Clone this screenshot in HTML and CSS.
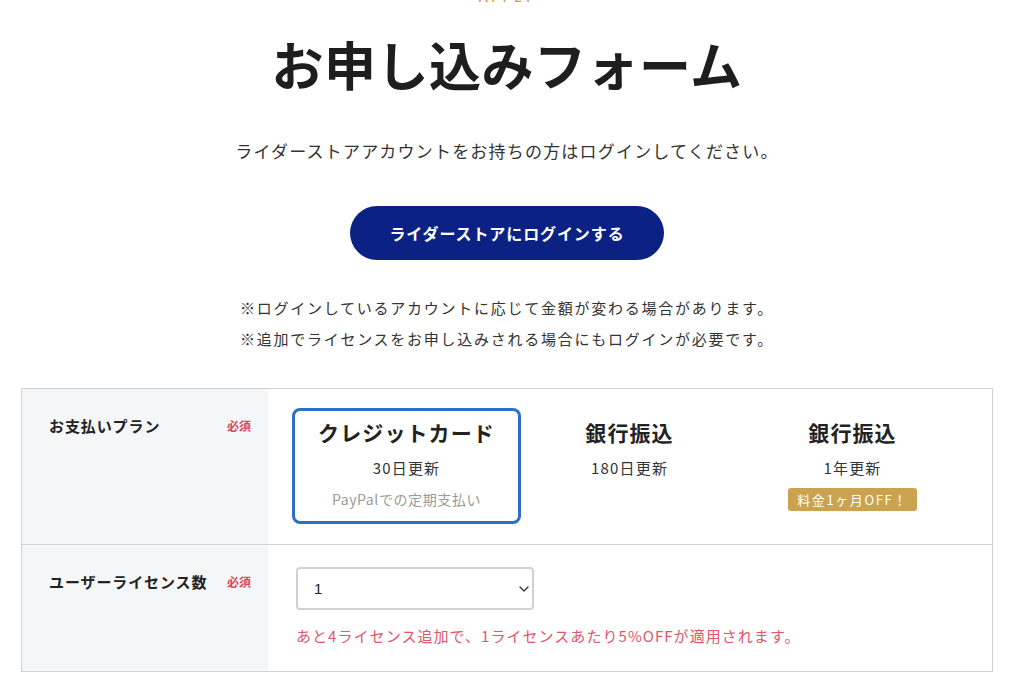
FILE: index.html
```html
<!DOCTYPE html>
<html lang="ja">
<head>
<meta charset="utf-8">
<title>お申し込みフォーム</title>
<link rel="stylesheet" href="styles.css">
</head>
<body>
<main class="page">
  <header class="head">
    <p class="eyebrow">APPLY</p>
    <h1 class="title">お申し込みフォーム</h1>
    <p class="lead">ライダーストアアカウントをお持ちの方はログインしてください。</p>
    <a class="login-btn" href="#">ライダーストアにログインする</a>
    <div class="notes">
      <p>※ログインしているアカウントに応じて金額が変わる場合があります。</p>
      <p>※追加でライセンスをお申し込みされる場合にもログインが必要です。</p>
    </div>
  </header>

  <section class="form">
    <div class="row">
      <div class="label-cell">
        <span class="label">お支払いプラン</span>
        <span class="req">必須</span>
      </div>
      <div class="field-cell plans-cell">
        <div class="plans">
          <div class="plan plan-active">
            <div class="plan-name">クレジットカード</div>
            <div class="plan-term">30日更新</div>
            <div class="plan-sub">PayPalでの定期支払い</div>
          </div>
          <div class="plan">
            <div class="plan-name">銀行振込</div>
            <div class="plan-term">180日更新</div>
          </div>
          <div class="plan">
            <div class="plan-name">銀行振込</div>
            <div class="plan-term">1年更新</div>
            <div class="badge">料金1ヶ月OFF！</div>
          </div>
        </div>
      </div>
    </div>
    <div class="row">
      <div class="label-cell">
        <span class="label">ユーザーライセンス数</span>
        <span class="req">必須</span>
      </div>
      <div class="field-cell license-cell">
        <div class="select-wrap">
          <select class="select">
            <option>1</option>
            <option>2</option>
            <option>3</option>
            <option>4</option>
            <option>5</option>
          </select>
          <svg class="chev" width="10" height="6" viewBox="0 0 10 6" aria-hidden="true"><path d="M1 1l4 4 4-4" fill="none" stroke="#333" stroke-width="1.3" stroke-linecap="round" stroke-linejoin="round"/></svg>
        </div>
        <p class="discount">あと4ライセンス追加で、1ライセンスあたり5%OFFが適用されます。</p>
      </div>
    </div>
  </section>
</main>
</body>
</html>
```

FILE: styles.css
```css
* { box-sizing: border-box; }
html, body { margin: 0; padding: 0; background: #fff; }
body {
  font-family: "Noto Sans CJK JP", "Noto Sans", "Liberation Sans", sans-serif;
  color: #222;
  overflow: hidden;
}
p { margin: 0; }

.page {
  width: 972px;
  margin-left: 21px;
}

.head {
  display: flex;
  flex-direction: column;
  align-items: center;
  text-align: center;
}

.eyebrow {
  margin-top: -12px;
  font-size: 14px;
  line-height: 18px;
  letter-spacing: 3px;
  color: #c9a24c;
  font-family: "Noto Sans", "Liberation Sans", sans-serif;
  font-weight: 500;
}

.title {
  margin: 23px 0 0;
  font-size: 52px;
  line-height: 70px;
  font-weight: 700;
  letter-spacing: 0.5px;
  color: #1e1e1e;
}

.lead {
  margin-top: 38px;
  font-size: 17px;
  line-height: 28px;
  letter-spacing: 1.2px;
  color: #333;
}

.login-btn {
  margin-top: 41px;
  width: 314px;
  height: 54px;
  border-radius: 27px;
  background: #0b2284;
  color: #fff;
  text-decoration: none;
  font-size: 16px;
  font-weight: 700;
  letter-spacing: 0.9px;
  display: flex;
  align-items: center;
  justify-content: center;
}

.notes {
  margin-top: 32px;
  font-size: 15px;
  line-height: 31px;
  letter-spacing: 1.75px;
  color: #333;
}

.form {
  margin-top: 34px;
  border: 1px solid #d2d2d2;
}

.row {
  display: flex;
}
.row + .row { border-top: 1px solid #d2d2d2; }

.label-cell {
  width: 246px;
  flex: none;
  background: #f5f6f8;
  display: flex;
  align-items: flex-start;
  justify-content: space-between;
  padding: 25px 17px 0 27px;
}
.label {
  font-size: 15px;
  line-height: 24px;
  font-weight: 700;
  letter-spacing: 0.9px;
  color: #222;
}
.req {
  font-size: 12px;
  line-height: 24px;
  font-weight: 700;
  color: #d8475c;
}

.field-cell { flex: 1; }

.plans-cell { padding: 19px 0 20px 27px; }
.plans {
  display: grid;
  grid-template-columns: repeat(3, 223px);
}
.plan {
  display: flex;
  flex-direction: column;
  align-items: center;
  padding-top: 9px;
  height: 116px;
}
.plan-active {
  margin: 0 -3px;
  border: 3px solid #2f6fcb;
  border-radius: 8px;
  padding-top: 6px;
}
.plan-name {
  font-size: 21px;
  line-height: 30px;
  font-weight: 700;
  letter-spacing: 1.1px;
  color: #222;
}
.plan-term {
  margin-top: 9px;
  font-size: 15px;
  line-height: 24px;
  letter-spacing: 1.2px;
  color: #333;
}
.plan-sub {
  margin-top: 8px;
  font-size: 14px;
  line-height: 22px;
  letter-spacing: 0.6px;
  color: #9a9a9a;
}
.badge {
  margin-top: 8px;
  height: 23px;
  padding: 0 9px;
  border-radius: 3px;
  background: #cba24f;
  color: #fff;
  font-size: 13px;
  line-height: 23px;
  letter-spacing: 1.6px;
}

.license-cell { padding: 22px 0 23px 28px; }
.select-wrap {
  position: relative;
  width: 238px;
  height: 43px;
}
.select {
  appearance: none;
  -webkit-appearance: none;
  width: 100%;
  height: 100%;
  border: 2px solid #cfd1d4;
  border-radius: 4px;
  background: #fff;
  padding: 0 0 0 16px;
  font-family: "Liberation Sans", "Noto Sans", sans-serif;
  font-size: 15px;
  color: #222;
}
.chev {
  position: absolute;
  right: 5px;
  top: 19px;
}
.discount {
  margin-top: 14px;
  font-size: 15px;
  line-height: 24px;
  letter-spacing: 1.05px;
  color: #e0566a;
}
```
